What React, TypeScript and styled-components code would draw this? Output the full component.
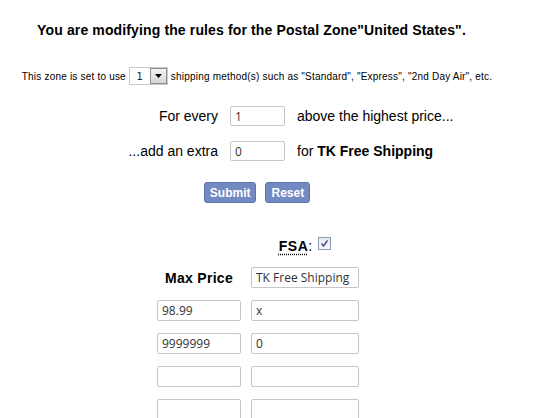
import React from "react";
import styled, { createGlobalStyle } from "styled-components";

const GlobalStyle = createGlobalStyle`
  body {
    margin: 0;
    background: #ffffff;
    font-family: "Liberation Sans", Arial, sans-serif;
    color: #000;
  }
`;

const Page = styled.div`
  width: 514px;
`;

const Heading = styled.div`
  padding: 22px 11px 0 0;
  font-size: 14px;
  line-height: 16px;
  font-weight: bold;
  letter-spacing: 0.13px;
  text-align: center;
`;

const ZoneLine = styled.div`
  margin-top: 28px;
  display: flex;
  justify-content: center;
  align-items: center;
  height: 20px;
  font-size: 10px;
  letter-spacing: 0.2px;
  white-space: pre;
`;

const Select = styled.span`
  display: inline-flex;
  align-items: stretch;
  width: 39px;
  height: 18px;
  margin: 0 3px;
  border: 1px solid #c9c9c9;
  background: #fff;
  box-sizing: border-box;
`;

const SelectValue = styled.span`
  flex: 1;
  display: flex;
  align-items: center;
  justify-content: center;
  font-family: "DejaVu Sans", sans-serif;
  font-size: 10px;
  color: #222;
`;

const SelectArrow = styled.span`
  width: 15px;
  display: flex;
  align-items: center;
  justify-content: center;
  border: 1px solid #8f8f8f;
  background: linear-gradient(#f2f2f2, #d6d6d6);
`;

const RuleGrid = styled.div`
  margin-top: 20px;
  display: grid;
  grid-template-columns: 218px 55px auto;
  column-gap: 12px;
  row-gap: 15px;
  align-items: center;
  font-size: 14px;
`;

const Label = styled.span<{ $align?: string }>`
  text-align: ${(p) => p.$align || "left"};
  white-space: nowrap;
`;

const Field = styled.input<{ $short?: boolean }>`
  box-sizing: border-box;
  width: 100%;
  height: ${(p) => (p.$short ? "20px" : "21px")};
  padding: 0 4px;
  border: 1px solid #c6c6c6;
  border-radius: 2px;
  font-family: "Open Sans", sans-serif;
  font-size: 12px;
  color: #333;
  outline: none;
`;

const Buttons = styled.div`
  margin-top: 21px;
  display: flex;
  justify-content: center;
  gap: 9px;
`;

const Button = styled.button`
  height: 21px;
  padding: 0 5px;
  border: 1px solid #5f74ad;
  border-radius: 3px;
  background: #7389c2;
  color: #fff;
  font-family: "Liberation Sans", Arial, sans-serif;
  font-size: 12px;
  font-weight: bold;
  cursor: pointer;
`;

const PriceGrid = styled.div`
  margin: 33px 0 0 157px;
  display: grid;
  grid-template-columns: 84px 108px;
  column-gap: 10px;
  row-gap: 12px;
  align-items: center;
`;

const FsaCell = styled.div`
  grid-column: 2;
  height: 19px;
  display: flex;
  align-items: center;
  justify-content: center;
  gap: 6px;
  font-size: 14px;
`;

const Abbr = styled.abbr`
  font-weight: bold;
  letter-spacing: 0.5px;
  text-decoration: underline dotted;
  text-underline-offset: 3px;
`;

const Check = styled.span`
  display: inline-flex;
  width: 13px;
  height: 13px;
  box-sizing: border-box;
  border: 1px solid #8e9bb6;
  background: linear-gradient(#e6e9f0, #f8f9fb);
  align-items: center;
  justify-content: center;
  margin-top: -4px;
`;

const HeadCell = styled.div`
  text-align: center;
  font-size: 14px;
  font-weight: bold;
  letter-spacing: 0.3px;
`;

const rows = [
  ["98.99", "x"],
  ["9999999", "0"],
  ["", ""],
  ["", ""],
];

export default function App() {
  return (
    <Page>
      <GlobalStyle />
      <Heading>
        You are modifying the rules for the Postal Zone"United States".
      </Heading>
      <ZoneLine>
        This zone is set to use
        <Select>
          <SelectValue>1</SelectValue>
          <SelectArrow>
            <svg width="7" height="4" viewBox="0 0 7 4">
              <path d="M0 0H7L3.5 4Z" fill="#000" />
            </svg>
          </SelectArrow>
        </Select>
        shipping method(s) such as "Standard", "Express", "2nd Day Air", etc.
      </ZoneLine>
      <RuleGrid>
        <Label $align="right">For every</Label>
        <Field $short defaultValue="1" />
        <Label>above the highest price...</Label>
        <Label $align="right">...add an extra</Label>
        <Field $short defaultValue="0" />
        <Label>
          for <b>TK Free Shipping</b>
        </Label>
      </RuleGrid>
      <Buttons>
        <Button>Submit</Button>
        <Button>Reset</Button>
      </Buttons>
      <PriceGrid>
        <FsaCell>
          <span>
            <Abbr title="Free Shipping Allowed">FSA</Abbr>:
          </span>
          <Check>
            <svg width="9" height="9" viewBox="0 0 9 9">
              <path
                d="M1.5 4.5L3.5 7L7.5 1.5"
                fill="none"
                stroke="#4a5a86"
                strokeWidth="1.6"
              />
            </svg>
          </Check>
        </FsaCell>
        <HeadCell>Max Price</HeadCell>
        <Field defaultValue="TK Free Shipping" />
        {rows.map(([price, cost], i) => (
          <React.Fragment key={i}>
            <Field defaultValue={price} />
            <Field defaultValue={cost} />
          </React.Fragment>
        ))}
      </PriceGrid>
    </Page>
  );
}
